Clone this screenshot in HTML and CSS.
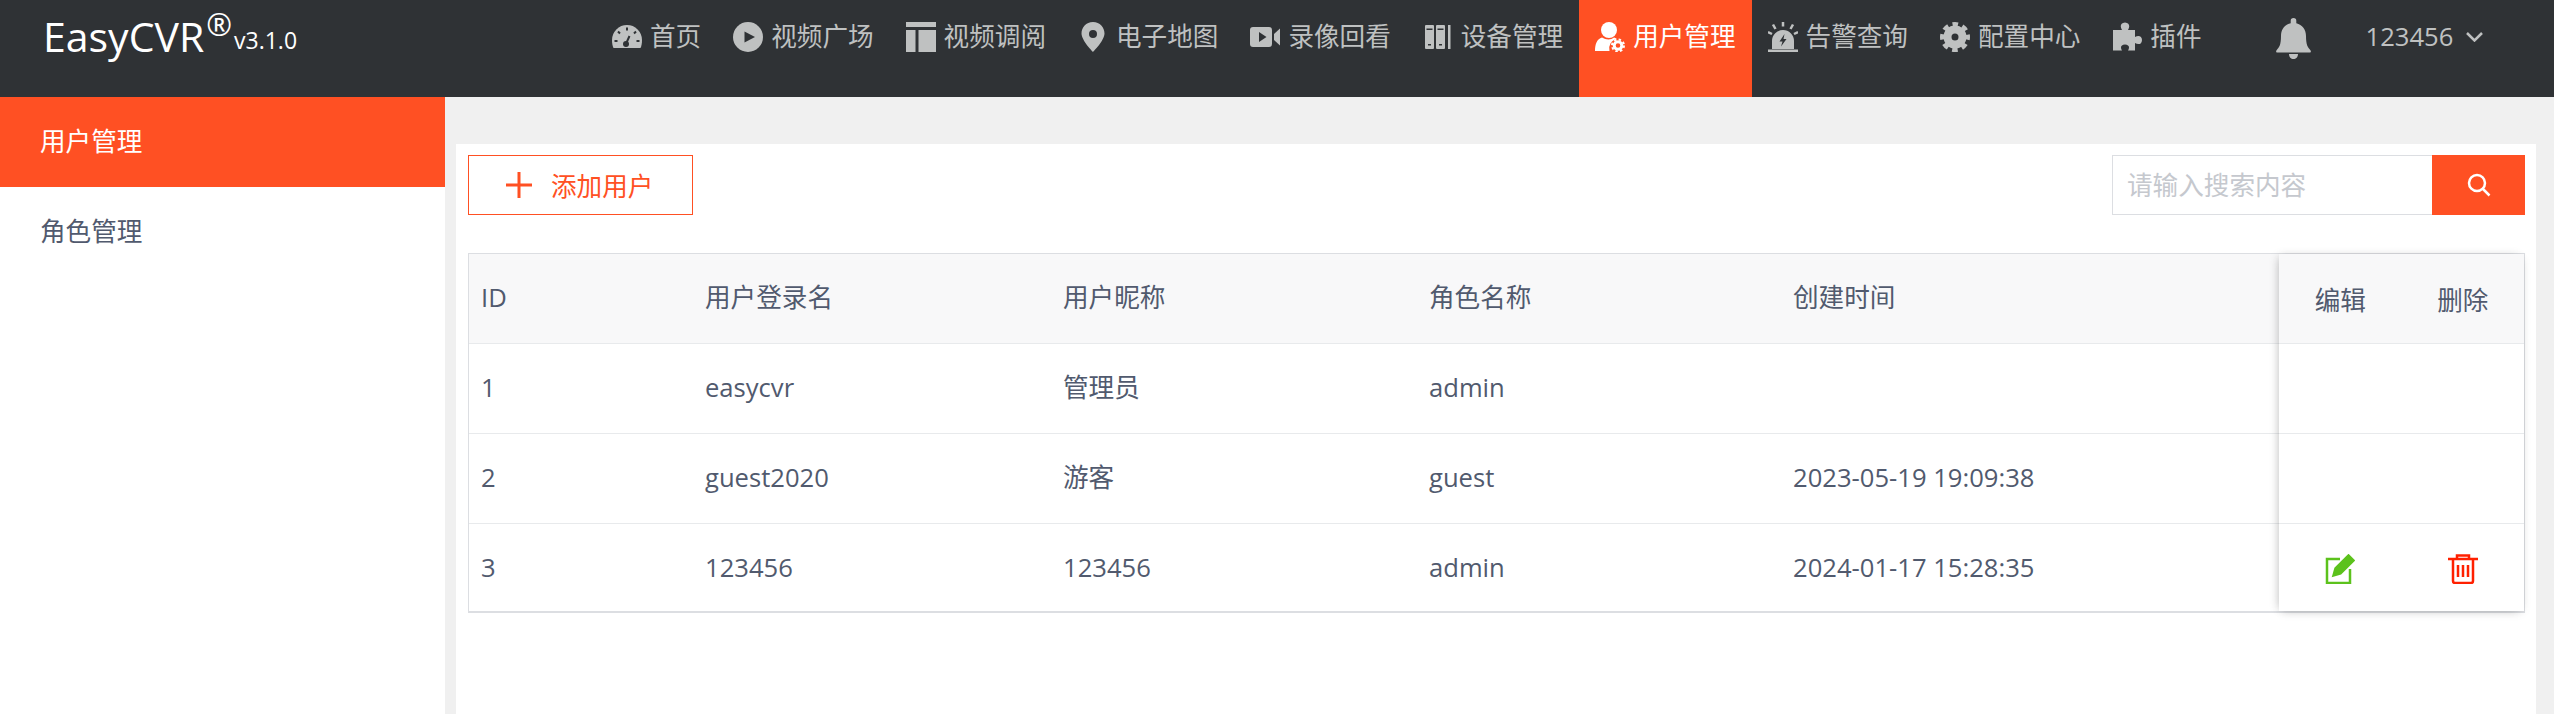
FILE: index.html
```html
<!DOCTYPE html>
<html lang="zh-CN">
<head>
    <meta charset="UTF-8">
    <meta name="viewport" content="width=device-width, initial-scale=1.0">
    <title>EasyCVR</title>
    <link rel="stylesheet" href="styles.css">
</head>
<body>
    <header class="header">
        <div class="logo">
            <span class="logo-name">EasyCVR</span><span class="logo-reg">®</span><span class="logo-version">v3.1.0</span>
        </div>
        <nav class="nav">
            <a class="nav-item">
                <svg class="nav-icon" viewBox="0 0 30 30"><path d="M1.5 26C.5 24 0 21.5 0 18a15 15 0 0 1 30 0c0 3.500-.5 6-1.500 8z"/><path class="cut-line" d="M15 5.500v3M6 9.500l2 2M24 9.500l-2 2M2.500 19h3M24.500 19h3M13 24l4.500-10"/><circle class="cut" cx="14" cy="22" r="3"/></svg>
                <span>首页</span>
            </a>
            <a class="nav-item">
                <svg class="nav-icon" viewBox="0 0 30 30"><circle cx="15" cy="15" r="15"/><path class="cut" d="M11.500 9.500 22 15l-10.500 5.500z"/></svg>
                <span>视频广场</span>
            </a>
            <a class="nav-item">
                <svg class="nav-icon" viewBox="0 0 30 30"><path d="M0 0h30.500v5H0zM0 8h9.500v22H0zM12.500 8h18v22h-18z"/></svg>
                <span>视频调阅</span>
            </a>
            <a class="nav-item">
                <svg class="nav-icon" viewBox="0 0 30 30"><path fill-rule="evenodd" d="M15 0C8 0 3.500 5.500 3.500 11.500 3.500 18.500 15 30 15 30s11.500-11.500 11.500-18.500C26.500 5.500 22 0 15 0zm0 8a4 4 0 1 1 0 8 4 4 0 0 1 0-8z"/></svg>
                <span>电子地图</span>
            </a>
            <a class="nav-item">
                <svg class="nav-icon" viewBox="0 0 30 30"><rect x="0" y="5" width="22" height="20" rx="3"/><path class="cut" d="M9 10l7.500 5L9 20z"/><path d="M24 12l6-5.500v17L24 18z"/></svg>
                <span>录像回看</span>
            </a>
            <a class="nav-item">
                <svg class="nav-icon" viewBox="0 0 30 30"><rect x="2" y="3" width="9" height="24" rx="1"/><rect x="13" y="3" width="9" height="24" rx="1"/><rect x="25" y="3" width="2.500" height="24"/><path class="cut" d="M3.500 6.500h6v1.500h-6zM14.500 6.500h6v1.500h-6zM5 22h3v1.500H5zM16 22h3v1.500h-3z"/></svg>
                <span>设备管理</span>
            </a>
            <a class="nav-item active">
                <svg class="nav-icon" viewBox="0 0 30 30"><circle cx="14" cy="8" r="8"/><path d="M0 29c0-7 2-12 7-13.500 4 2.500 9 2.500 12 0 1 .3 2 .8 2.800 1.500A9.500 9.500 0 0 0 14.500 29z"/><circle class="gear-ring" cx="23" cy="23.500" r="3.800"/><circle class="gear-teeth" cx="23" cy="23.500" r="6"/></svg>
                <span>用户管理</span>
            </a>
            <a class="nav-item">
                <svg class="nav-icon" viewBox="0 0 30 30"><path d="M4 27V19a11 11 0 0 1 22 0v8zM0 27.500h30V30H0z"/><path class="cut" d="M16.500 12l-5 7.500h3l-1.500 5 5.500-7.500h-3z"/><path class="ray" d="M15 0v4.500M5 2.500l2.500 4.500M25 2.500l-2.500 4.500M0 10l4 2M30 10l-4 2"/></svg>
                <span>告警查询</span>
            </a>
            <a class="nav-item">
                <svg class="nav-icon" viewBox="0 0 30 30"><circle class="gear-big" cx="15" cy="15" r="7.500"/><circle class="gear-big-teeth" cx="15" cy="15" r="12.500"/></svg>
                <span>配置中心</span>
            </a>
            <a class="nav-item">
                <svg class="nav-icon" viewBox="0 0 30 30"><path d="M1 8h9c-2-3-2-7 3-7.500 5 .5 5 4.500 3 7.500h7v7c3-2 7-1.500 7 3s-4 5-7 3v7.500h-7c2-3 1-6-3-6s-5 3-3 6H1v-8c2 1.500 0 .5 0 0-1.500 0-1 0 0 0z"/></svg>
                <span>插件</span>
            </a>
        </nav>
        <div class="bell">
            <svg viewBox="0 0 35 41" width="35" height="41"><path d="M17.500 0a2.800 2.800 0 0 1 2.800 2.800v2.400c6 1.300 9.700 6.500 9.700 12.800 0 9 1.800 11.300 4.400 14.200.8.900.6 2.300-.7 2.300H1.300C0 34.500-.2 33.100.6 32.200 3.200 29.300 5 27 5 18 5 11.700 8.700 6.500 14.700 5.200V2.800A2.800 2.800 0 0 1 17.500 0zM13 36h9c0 3-2 5-4.500 5S13 39 13 36z"/></svg>
        </div>
        <div class="user">
            <span>123456</span>
            <svg class="chevron" viewBox="0 0 17 10" width="17" height="10"><path d="M1 1l7.500 7.500L16 1"/></svg>
        </div>
    </header>

    <div class="page">
        <aside class="sidebar">
            <a class="side-item active">用户管理</a>
            <a class="side-item">角色管理</a>
        </aside>

        <main class="main">
            <div class="toolbar">
                <button class="add-btn">
                    <svg viewBox="0 0 26 26" width="26" height="26"><path d="M13 0v26M0 13h26"/></svg>
                    <span>添加用户</span>
                </button>
                <div class="search">
                    <input class="search-input" type="text" placeholder="请输入搜索内容">
                    <button class="search-btn">
                        <svg viewBox="0 0 24 24" width="24" height="24"><circle cx="10" cy="10" r="8"/><path d="M16 16l6.500 6.500"/></svg>
                    </button>
                </div>
            </div>

            <div class="table">
                <div class="table-main">
                    <div class="row head">
                        <div class="cell">ID</div>
                        <div class="cell">用户登录名</div>
                        <div class="cell">用户昵称</div>
                        <div class="cell">角色名称</div>
                        <div class="cell">创建时间</div>
                    </div>
                    <div class="row">
                        <div class="cell">1</div>
                        <div class="cell">easycvr</div>
                        <div class="cell">管理员</div>
                        <div class="cell">admin</div>
                        <div class="cell"></div>
                    </div>
                    <div class="row">
                        <div class="cell">2</div>
                        <div class="cell">guest2020</div>
                        <div class="cell">游客</div>
                        <div class="cell">guest</div>
                        <div class="cell">2023-05-19 19:09:38</div>
                    </div>
                    <div class="row">
                        <div class="cell">3</div>
                        <div class="cell">123456</div>
                        <div class="cell">123456</div>
                        <div class="cell">admin</div>
                        <div class="cell">2024-01-17 15:28:35</div>
                    </div>
                </div>
                <div class="table-fixed">
                    <div class="fixed-row head">
                        <div class="fixed-cell">编辑</div>
                        <div class="fixed-cell">删除</div>
                    </div>
                    <div class="fixed-row"></div>
                    <div class="fixed-row"></div>
                    <div class="fixed-row">
                        <div class="fixed-cell">
                            <svg class="edit-icon" viewBox="0 0 30 30" width="30" height="30"><path d="M15 5H2v24h23V15"/><path class="pencil" d="M8.500 21.500l2-7L23.500 1.500l5 5-13 13z"/></svg>
                        </div>
                        <div class="fixed-cell">
                            <svg class="trash-icon" viewBox="0 0 30 30" width="30" height="30"><path d="M0 5h30M9 5V1.500h12V5M5 5v22a2 2 0 0 0 2 2h16a2 2 0 0 0 2-2V5M10 11v12M15 11v12M20 11v12"/></svg>
                        </div>
                    </div>
                </div>
            </div>
        </main>
    </div>
</body>
</html>
```

FILE: styles.css
```css
* {
    box-sizing: border-box;
}
html, body {
    height: 100%;
}
body {
    margin: 0;
    background-color: #f0f0f0;
    color: #515a6e;
    font-family: "Open Sans", "Noto Sans CJK SC", sans-serif;
    font-size: 25.6px;
    overflow: hidden;
}
svg {
    display: block;
}

/* header */
.header {
    display: flex;
    height: 97px;
    background-color: #2f3235;
    color: #bfc1c1;
}
.logo {
    display: flex;
    align-items: flex-start;
    width: 596px;
    padding-left: 43px;
    color: #fff;
}
.logo-name {
    margin-top: 8px;
    font-size: 41px;
    line-height: 56px;
}
.logo-reg {
    margin: 3px 0 0 2px;
    font-size: 31px;
    line-height: 42px;
}
.logo-version {
    margin: 24px 0 0 2px;
    font-size: 23px;
    line-height: 32px;
}
.nav {
    display: flex;
}
.nav-item {
    display: flex;
    align-items: flex-start;
    gap: 8px;
    height: 97px;
    padding: 22px 16px 0;
    line-height: 30px;
}
.nav-item.active {
    background-color: #ff5023;
    color: #fff;
}
.nav-icon {
    width: 30px;
    height: 30px;
    fill: currentColor;
}
.cut {
    fill: #2f3235;
}
.cut-line {
    fill: none;
    stroke: #2f3235;
    stroke-width: 2;
}
.ray {
    fill: none;
    stroke: currentColor;
    stroke-width: 2.5;
}
.gear-ring {
    fill: none;
    stroke: #fff;
    stroke-width: 3;
}
.gear-teeth {
    fill: none;
    stroke: #fff;
    stroke-width: 2;
    stroke-dasharray: 2.4 2.3;
}
.gear-big {
    fill: none;
    stroke: currentColor;
    stroke-width: 8;
}
.gear-big-teeth {
    fill: none;
    stroke: currentColor;
    stroke-width: 5;
    stroke-dasharray: 5.4 4.4;
    stroke-dashoffset: 2.7;
}
.bell {
    margin: 18px 0 0 58px;
}
.bell svg {
    fill: currentColor;
}
.user {
    display: flex;
    align-items: flex-start;
    gap: 13px;
    margin-left: 55px;
    padding-top: 19px;
    line-height: 35px;
}
.chevron {
    margin-top: 13px;
    fill: none;
    stroke: currentColor;
    stroke-width: 2.500;
}

/* page */
.page {
    display: flex;
    height: 617px;
}
.sidebar {
    width: 445px;
    background-color: #fff;
}
.side-item {
    display: block;
    height: 89.500px;
    padding-left: 40px;
    line-height: 89px;
}
.side-item.active {
    background-color: #ff5023;
    color: #fff;
}
.main {
    width: 2080px;
    height: 570px;
    margin: 47px 0 0 11px;
    padding: 11px 11px 0 12px;
    background-color: #fff;
}

/* toolbar */
.toolbar {
    display: flex;
    justify-content: space-between;
    margin-bottom: 38px;
}
.add-btn {
    display: flex;
    align-items: center;
    gap: 19px;
    width: 225px;
    height: 60px;
    padding: 0 0 0 37px;
    background-color: #fff;
    border: 1px solid #ff5023;
    color: #ff5023;
    font: inherit;
}
.add-btn svg {
    fill: none;
    stroke: currentColor;
    stroke-width: 3;
}
.search {
    display: flex;
    height: 60px;
}
.search-input {
    width: 320px;
    height: 60px;
    padding: 0 14px;
    border: 1px solid #dcdee2;
    border-right: none;
    color: #515a6e;
    font: inherit;
    outline: none;
}
.search-input::placeholder {
    color: #c5c8ce;
    opacity: 1;
}
.search-btn {
    display: flex;
    align-items: center;
    justify-content: center;
    width: 93px;
    height: 60px;
    padding: 0;
    background-color: #ff5023;
    border: none;
}
.search-btn svg {
    fill: none;
    stroke: #fff;
    stroke-width: 2.500;
}

/* table */
.table {
    display: flex;
    height: 360px;
    border: 1px solid #dcdee2;
    border-bottom-width: 2px;
}
.table-main {
    flex: 1;
}
.row {
    display: grid;
    grid-template-columns: 224px 358px 366px 364px 1fr;
    height: 90px;
    border-bottom: 1px solid #e8eaec;
}
.row:last-child, .fixed-row:last-child {
    border-bottom: none;
}
.head {
    background-color: #f8f8f9;
}
.cell {
    padding-left: 12px;
    line-height: 88px;
    white-space: nowrap;
}
.table-fixed {
    width: 245px;
    background-color: #fff;
    box-shadow: -3px 0 10px -3px rgba(0, 0, 0, .2), 0 3px 10px -3px rgba(0, 0, 0, .15);
}
.fixed-row {
    display: grid;
    grid-template-columns: 1fr 1fr;
    height: 90px;
    border-bottom: 1px solid #e8eaec;
}
.fixed-cell {
    display: flex;
    align-items: center;
    justify-content: center;
}
.edit-icon {
    fill: none;
    stroke: #5cc21c;
    stroke-width: 2.500;
}
.pencil {
    fill: #5cc21c;
}
.trash-icon {
    fill: none;
    stroke: #ff2000;
    stroke-width: 2.500;
}
```
